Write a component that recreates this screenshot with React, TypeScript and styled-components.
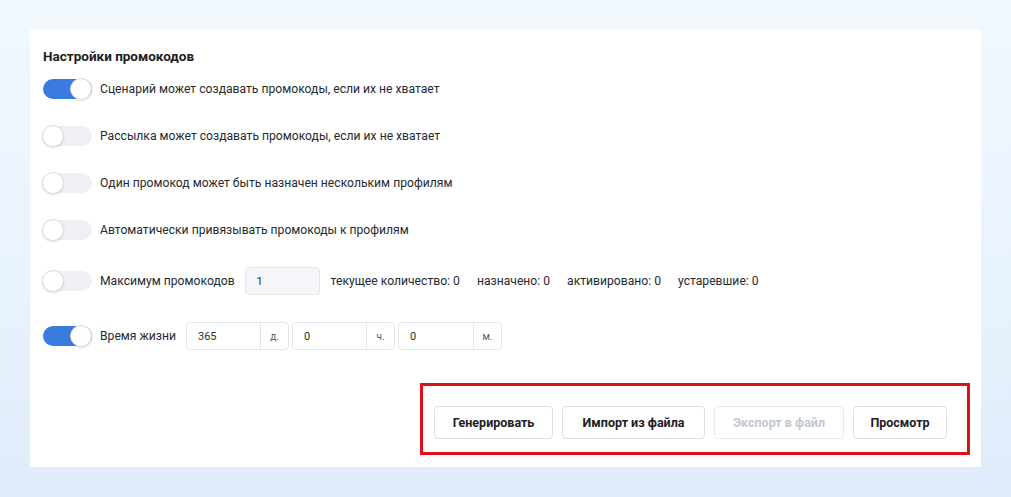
import React from "react";
import styled, { createGlobalStyle } from "styled-components";

const Global = createGlobalStyle`
  html, body { margin: 0; padding: 0; }
  body {
    width: 1011px;
    height: 497px;
    overflow: hidden;
    background: linear-gradient(180deg, #f1f9fe 0%, #e9f3fd 55%, #e0ebfb 100%);
    font-family: Roboto, "Noto Sans", "Liberation Sans", sans-serif;
    color: #262a30;
  }
`;

const Page = styled.div`
  padding: 30px 30px 0 30px;
  box-sizing: border-box;
  height: 497px;
`;

const Card = styled.div`
  background: #ffffff;
  width: 951px;
  height: 437px;
  box-sizing: border-box;
  padding: 17px 11px 0 13px;
  display: flex;
  flex-direction: column;
`;

const Title = styled.div`
  font-size: 13.5px;
  font-weight: 700;
  color: #1d2024;
  line-height: 18px;
  margin-bottom: 14px;
`;

const Rows = styled.div`
  display: flex;
  flex-direction: column;
  gap: 27px;
`;

const Row = styled.div<{ $h?: number }>`
  display: flex;
  align-items: center;
  height: ${(p) => p.$h ?? 20}px;
  font-size: 12.15px;
`;

const Track = styled.span<{ $on: boolean }>`
  position: relative;
  width: 49px;
  height: 20px;
  border-radius: 10px;
  background: ${(p) => (p.$on ? "#3a7be0" : "#eef0f4")};
  flex-shrink: 0;
  margin-right: 8px;
`;

const Knob = styled.span<{ $on: boolean }>`
  position: absolute;
  top: -1px;
  left: ${(p) => (p.$on ? "27px" : "-1px")};
  width: 22px;
  height: 22px;
  box-sizing: border-box;
  border-radius: 50%;
  background: #ffffff;
  border: 1px solid #d9dce2;
  box-shadow: 0 1px 2px rgba(0, 0, 0, 0.12);
`;

const Label = styled.span`
  color: #262a30;
  white-space: nowrap;
`;

const Field = styled.div<{ $filled?: boolean; $w: number }>`
  width: ${(p) => p.$w}px;
  height: 28px;
  box-sizing: border-box;
  border: 1px solid #e3e6eb;
  border-radius: 4px;
  background: ${(p) => (p.$filled ? "#f5f6f9" : "#ffffff")};
  display: flex;
  align-items: center;
  font-size: 11px;
  color: #2a2d33;
`;

const FieldValue = styled.span`
  flex: 1;
  padding-left: 11px;
`;

const Suffix = styled.span`
  width: 27px;
  height: 100%;
  border-left: 1px solid #e3e6eb;
  display: flex;
  align-items: center;
  justify-content: center;
  font-size: 10px;
  color: #555a62;
`;

const MaxField = styled(Field)`
  margin-left: 10px;
  margin-right: 11px;
`;

const Stats = styled.div`
  display: flex;
  gap: 17px;
`;

const TimeGroup = styled.div`
  display: flex;
  gap: 3px;
  margin-left: 10px;
`;

const Footer = styled.div`
  display: flex;
  justify-content: flex-end;
  margin-top: 33px;
`;

const Highlight = styled.div`
  border: 3px solid #e01018;
  padding: 20px 20px 13px 11px;
  display: flex;
  gap: 9px;
`;

const Button = styled.button<{ $w: number; $disabled?: boolean }>`
  width: ${(p) => p.$w}px;
  height: 33px;
  box-sizing: border-box;
  background: #ffffff;
  border: 1px solid ${(p) => (p.$disabled ? "#e8eaee" : "#dcdfe4")};
  border-radius: 4px;
  font-family: inherit;
  font-size: 12.5px;
  font-weight: 700;
  color: ${(p) => (p.$disabled ? "#c4c8cf" : "#1d2024")};
  padding: 0;
  cursor: ${(p) => (p.$disabled ? "default" : "pointer")};
`;

const Toggle = ({ on }: { on: boolean }) => (
  <Track $on={on}>
    <Knob $on={on} />
  </Track>
);

export default function App() {
  return (
    <>
      <Global />
      <Page>
        <Card>
          <Title>Настройки промокодов</Title>
          <Rows>
            <Row>
              <Toggle on />
              <Label>Сценарий может создавать промокоды, если их не хватает</Label>
            </Row>
            <Row>
              <Toggle on={false} />
              <Label>Рассылка может создавать промокоды, если их не хватает</Label>
            </Row>
            <Row>
              <Toggle on={false} />
              <Label>Один промокод может быть назначен нескольким профилям</Label>
            </Row>
            <Row>
              <Toggle on={false} />
              <Label>Автоматически привязывать промокоды к профилям</Label>
            </Row>
            <Row $h={28}>
              <Toggle on={false} />
              <Label>Максимум промокодов</Label>
              <MaxField $filled $w={75}>
                <FieldValue>1</FieldValue>
              </MaxField>
              <Stats>
                <Label>текущее количество: 0</Label>
                <Label>назначено: 0</Label>
                <Label>активировано: 0</Label>
                <Label>устаревшие: 0</Label>
              </Stats>
            </Row>
            <Row $h={28}>
              <Toggle on />
              <Label>Время жизни</Label>
              <TimeGroup>
                <Field $w={103}>
                  <FieldValue>365</FieldValue>
                  <Suffix>д.</Suffix>
                </Field>
                <Field $w={103}>
                  <FieldValue>0</FieldValue>
                  <Suffix>ч.</Suffix>
                </Field>
                <Field $w={104}>
                  <FieldValue>0</FieldValue>
                  <Suffix>м.</Suffix>
                </Field>
              </TimeGroup>
            </Row>
          </Rows>
          <Footer>
            <Highlight>
              <Button $w={119}>Генерировать</Button>
              <Button $w={143}>Импорт из файла</Button>
              <Button $w={130} $disabled>
                Экспорт в файл
              </Button>
              <Button $w={94}>Просмотр</Button>
            </Highlight>
          </Footer>
        </Card>
      </Page>
    </>
  );
}
